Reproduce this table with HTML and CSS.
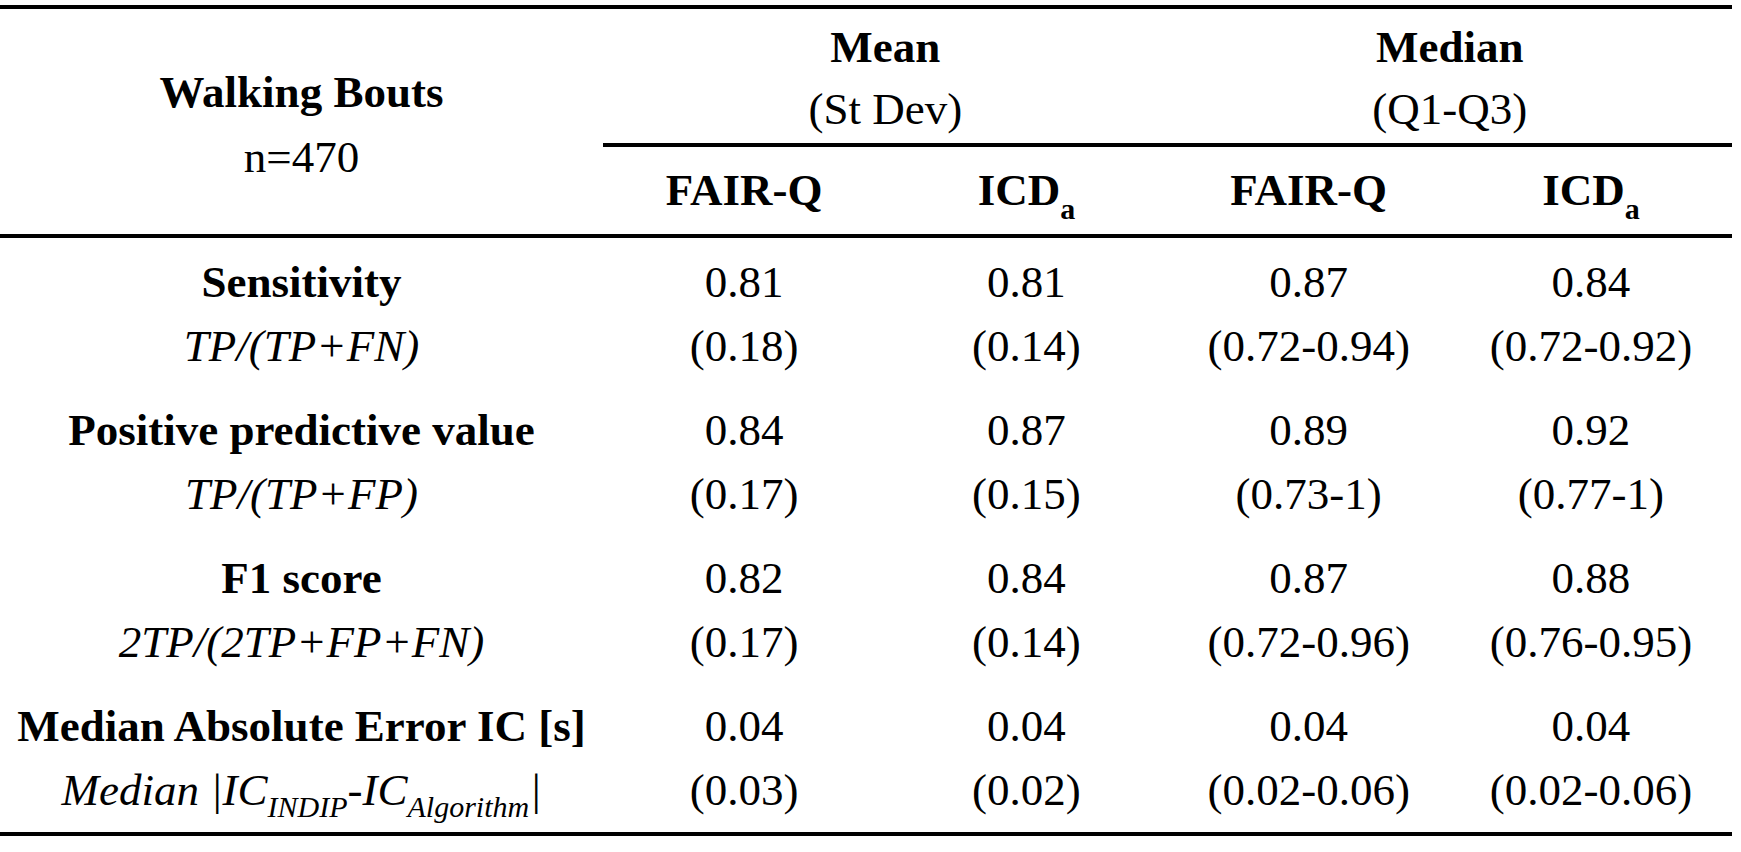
FILE: index.html
```html
<!DOCTYPE html>
<html lang="en">
<head>
<meta charset="utf-8">
<title>Walking Bouts</title>
<link rel="stylesheet" href="styles.css">
</head>
<body>
<div class="page">
<table class="stats">
  <colgroup>
    <col class="c-label">
    <col class="c-val">
    <col class="c-val">
    <col class="c-val">
    <col class="c-val">
  </colgroup>
  <thead>
    <tr class="h1">
      <th class="corner" rowspan="2"><b>Walking Bouts</b><br><span class="reg">n=470</span></th>
      <th class="grp" colspan="2"><b>Mean</b><br><span class="reg">(St Dev)</span></th>
      <th class="grp" colspan="2"><b>Median</b><br><span class="reg">(Q1-Q3)</span></th>
    </tr>
    <tr class="h2">
      <th>FAIR-Q</th>
      <th>ICD<span class="hsub">a</span></th>
      <th>FAIR-Q</th>
      <th>ICD<span class="hsub">a</span></th>
    </tr>
  </thead>
  <tbody>
    <tr>
      <td class="lbl"><b>Sensitivity</b><br><i>TP/(TP+FN)</i></td>
      <td>0.81<br>(0.18)</td>
      <td>0.81<br>(0.14)</td>
      <td>0.87<br>(0.72-0.94)</td>
      <td>0.84<br>(0.72-0.92)</td>
    </tr>
    <tr>
      <td class="lbl"><b>Positive predictive value</b><br><i>TP/(TP+FP)</i></td>
      <td>0.84<br>(0.17)</td>
      <td>0.87<br>(0.15)</td>
      <td>0.89<br>(0.73-1)</td>
      <td>0.92<br>(0.77-1)</td>
    </tr>
    <tr>
      <td class="lbl"><b>F1 score</b><br><i>2TP/(2TP+FP+FN)</i></td>
      <td>0.82<br>(0.17)</td>
      <td>0.84<br>(0.14)</td>
      <td>0.87<br>(0.72-0.96)</td>
      <td>0.88<br>(0.76-0.95)</td>
    </tr>
    <tr class="last">
      <td class="lbl"><b>Median Absolute Error IC [s]</b><br><i>Median |IC<span class="isub">INDIP</span>-IC<span class="isub">Algorithm</span>|</i></td>
      <td>0.04<br>(0.03)</td>
      <td>0.04<br>(0.02)</td>
      <td>0.04<br>(0.02-0.06)</td>
      <td>0.04<br>(0.02-0.06)</td>
    </tr>
  </tbody>
</table>
</div>
</body>
</html>
```

FILE: styles.css
```css
html, body {
  margin: 0;
  padding: 0;
  background: #ffffff;
}

.page {
  padding-top: 5px;
  width: 1741px;
  height: 847px;
  font-family: "Liberation Serif", "Times New Roman", serif;
  color: #000000;
}

.stats {
  width: 1732px;
  table-layout: fixed;
  border-collapse: separate;
  border-spacing: 0;
  border-top: 4px solid #000;
  border-bottom: 4px solid #000;
  font-size: 45px;
}

.c-label {
  width: 603px;
}

.c-val {
  width: 282.25px;
}

.stats th,
.stats td {
  padding: 0;
  text-align: center;
  font-weight: normal;
}

.stats b {
  font-weight: bold;
}

.stats .reg {
  font-weight: normal;
}

.corner {
  vertical-align: middle;
  line-height: 65px;
  padding-top: 6px !important;
  border-bottom: 4px solid #000;
}

.h1 .grp {
  vertical-align: top;
  line-height: 62px;
  padding: 7px 0 3px 0 !important;
  border-bottom: 4px solid #000;
}

.h2 th {
  font-weight: bold;
  line-height: 62px;
  padding: 12px 0 13px 0 !important;
  border-bottom: 4px solid #000;
  vertical-align: top;
}

.hsub {
  font-size: 30px;
  line-height: 0;
  vertical-align: -14px;
}

.stats tbody td {
  line-height: 64px;
  padding: 12px 0 8px 0;
  vertical-align: top;
}

.stats tbody tr.last td {
  padding-bottom: 10px;
}

.isub {
  font-size: 30px;
  line-height: 0;
  vertical-align: -12px;
}
```
